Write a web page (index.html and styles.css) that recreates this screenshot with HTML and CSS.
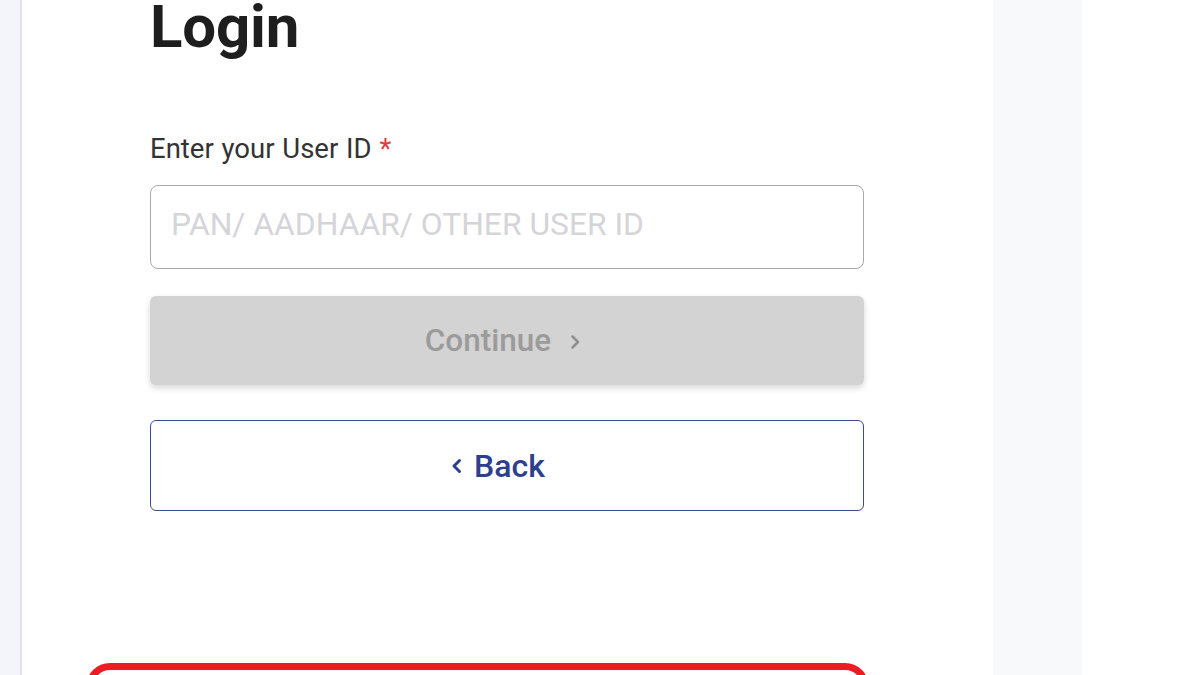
FILE: index.html
```html
<!DOCTYPE html>
<html lang="en">
<head>
<meta charset="utf-8">
<title>Login</title>
<link rel="stylesheet" href="styles.css">
</head>
<body>
<div class="page">
  <div class="side-left"></div>
  <main class="panel">
    <div class="form">
      <h1 class="title">Login</h1>
      <label class="label" for="uid">Enter your User ID <span class="req">*</span></label>
      <input id="uid" class="input" type="text" placeholder="PAN/ AADHAAR/ OTHER USER ID">
      <button class="btn btn-continue" type="button">Continue
        <svg class="chev" width="12" height="20" viewBox="0 0 12 20"><path d="M3.5 4.5l5.5 5.5-5.5 5.5" fill="none" stroke="currentColor" stroke-width="2.5" stroke-linecap="round" stroke-linejoin="round"/></svg>
      </button>
      <button class="btn btn-back" type="button">
        <svg class="chev chev-back" width="12" height="20" viewBox="0 0 12 20"><path d="M8.5 4.5l-5.5 5.5 5.5 5.5" fill="none" stroke="currentColor" stroke-width="3" stroke-linecap="round" stroke-linejoin="round"/></svg>
        Back
      </button>
      <div class="highlight"></div>
    </div>
  </main>
  <div class="side-strip"></div>
  <div class="side-right"></div>
</div>
</body>
</html>
```

FILE: styles.css
```css
html, body {
  margin: 0;
  padding: 0;
  height: 100%;
  overflow: hidden;
  background: #ffffff;
  font-family: Roboto, "Liberation Sans", Arial, sans-serif;
}

.page {
  display: flex;
  height: 675px;
  overflow: hidden;
}

.side-left {
  width: 20px;
  flex: none;
  background: #f4f5fa;
  border-right: 2px solid #e1e3f0;
}

.panel {
  width: 971px;
  flex: none;
  background: #ffffff;
}

.form {
  width: 714px;
  margin-left: 128px;
  display: flex;
  flex-direction: column;
}

.title {
  margin: -3px 0 0 0;
  font-size: 60px;
  line-height: 60px;
  font-weight: 700;
  color: #1e1e1e;
  letter-spacing: -0.2px;
}

.label {
  margin-top: 77px;
  font-size: 27.5px;
  line-height: 30px;
  color: #333333;
  word-spacing: 1px;
}

.req {
  color: #e03a3a;
}

.input {
  margin-top: 21px;
  box-sizing: border-box;
  height: 84px;
  width: 100%;
  border: 1.5px solid #a9a9a9;
  border-radius: 8px;
  padding: 0 20px 6px 20px;
  font-family: Roboto, "Liberation Sans", Arial, sans-serif;
  font-size: 31.8px;
  color: #333;
  outline: none;
}

.input::placeholder {
  color: #d5d5d9;
}

.btn {
  box-sizing: border-box;
  width: 100%;
  display: flex;
  align-items: center;
  justify-content: center;
  font-family: Roboto, "Liberation Sans", Arial, sans-serif;
  font-size: 32px;
  font-weight: 500;
  border-radius: 6px;
  cursor: pointer;
}

.btn-continue {
  margin-top: 27px;
  height: 89px;
  background: #d3d3d3;
  border: none;
  color: #9b9b9b;
  box-shadow: 0 3px 6px rgba(0, 0, 0, 0.16);
  gap: 18px;
  font-size: 31.5px;
  padding-right: 14px;
}

.btn-continue .chev {
  color: #8f8f8f;
  margin-top: 2px;
}

.btn-back {
  margin-top: 35px;
  height: 91px;
  background: #ffffff;
  border: 1.5px solid #3d4a9b;
  color: #2f3f8f;
  gap: 11px;
  padding-right: 24px;
}

.btn-back .chev {
  color: #2f3f8f;
}

.highlight {
  margin-top: 152px;
  margin-left: -64px;
  width: 783px;
  height: 80px;
  box-sizing: border-box;
  border: 7px solid #ed1c24;
  border-radius: 24px;
  flex: none;
}

.side-strip {
  width: 89px;
  flex: none;
  background: #f8f9fb;
}

.side-right {
  flex: 1;
  background: #ffffff;
}
```
